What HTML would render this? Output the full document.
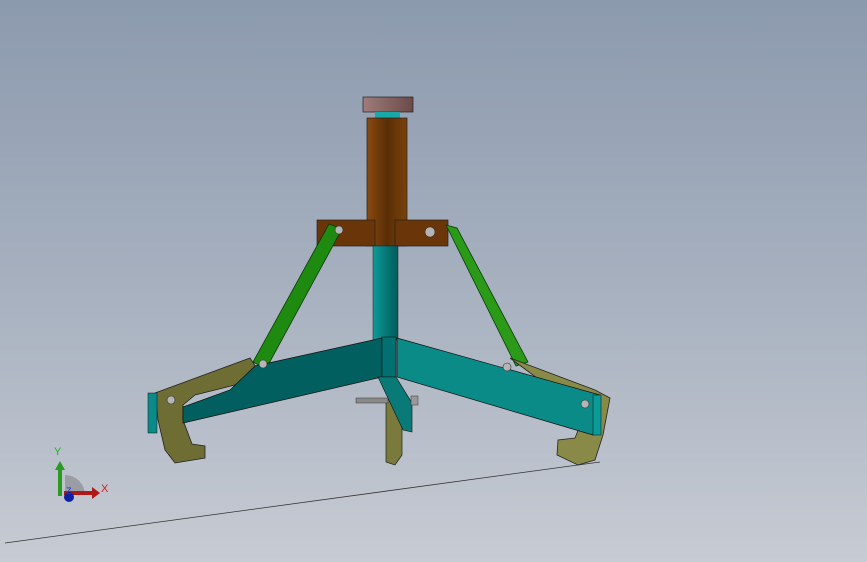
<!DOCTYPE html>
<html><head><meta charset="utf-8"><style>
html,body{margin:0;padding:0;width:867px;height:562px;overflow:hidden}
body{background:linear-gradient(#8c9aae 0%,#a6b0bf 50%,#c7cbd3 100%);font-family:"Liberation Sans",sans-serif}
svg{position:absolute;left:0;top:0}
</style></head><body>
<svg width="867" height="562" viewBox="0 0 867 562">
<defs>
<linearGradient id="br" x1="0" x2="1"><stop offset="0" stop-color="#8a4a10"/><stop offset="0.5" stop-color="#5a2e06"/><stop offset="1" stop-color="#7a420c"/></linearGradient>
<linearGradient id="cy" x1="0" x2="1"><stop offset="0" stop-color="#0d9a98"/><stop offset="1" stop-color="#005a5a"/></linearGradient>
<linearGradient id="cap" x1="0" x2="1"><stop offset="0" stop-color="#a07c7c"/><stop offset="1" stop-color="#6a4a4a"/></linearGradient>
</defs>
<path d="M5 543 L600 462" stroke="#333" stroke-width="0.8" fill="none"/>
<rect x="363" y="97" width="50" height="15" fill="url(#cap)" stroke="#222" stroke-width="0.7"/>
<rect x="375" y="112" width="25" height="7" fill="#1aa7a7"/>
<rect x="367" y="118" width="40" height="128" fill="url(#br)" stroke="#222" stroke-width="0.7"/>
<rect x="317" y="220" width="58" height="26" fill="#6a3508" stroke="#222" stroke-width="0.7"/>
<rect x="395" y="220" width="53" height="26" fill="#6a3508" stroke="#222" stroke-width="0.7"/>
<rect x="373" y="246" width="25" height="94" fill="url(#cy)" stroke="#222" stroke-width="0.5"/>
<path d="M329 224 L342 229 L266 369 L253 362 Z" fill="#1f8a10" stroke="#0a3a05" stroke-width="0.8"/>
<path d="M446 225 L457 228 L528 362 L516 366 Z" fill="#2a9a18" stroke="#0a3a05" stroke-width="0.8"/>
<path d="M155 393 L250 358 L258 370 L235 385 L195 395 L183 405 L183 420 L192 444 L205 446 L205 458 L175 463 L165 450 L158 420 Z" fill="#6e6d34" stroke="#222" stroke-width="0.8"/>
<path d="M382 338 L382 377 L183 423 L183 407 L230 390 L255 366 Z" fill="#01605f" stroke="#111" stroke-width="0.7"/>
<rect x="148" y="393" width="9" height="40" fill="#0a8a88" stroke="#111" stroke-width="0.5"/>
<path d="M510 358 L595 390 L610 398 L603 435 L595 460 L578 465 L557 455 L558 440 L575 438 L583 418 L560 395 Z" fill="#8a8a48" stroke="#222" stroke-width="0.8"/>
<path d="M397 338 L600 395 L593 435 L397 377 Z" fill="#0b8b88" stroke="#111" stroke-width="0.7"/>
<rect x="593" y="395" width="8" height="40" fill="#0a9a98" stroke="#111" stroke-width="0.5"/>
<rect x="382" y="337" width="14" height="40" fill="#017070" stroke="#111" stroke-width="0.6"/>
<path d="M386 400 L402 398 L402 455 L395 465 L386 462 Z" fill="#7a7a3c" stroke="#222" stroke-width="0.7"/>
<path d="M378 377 L396 377 L412 403 L412 432 L403 430 Z" fill="#0a7a78" stroke="#111" stroke-width="0.6"/>
<rect x="356" y="398" width="32" height="5" fill="#8a8a8a" stroke="#333" stroke-width="0.5"/>
<rect x="411" y="396" width="7" height="9" fill="#999" stroke="#333" stroke-width="0.5"/>
<g fill="#b5b5b5" stroke="#333" stroke-width="0.6">
<circle cx="339" cy="230" r="4"/><circle cx="430" cy="232" r="5"/>
<circle cx="263" cy="364" r="4"/><circle cx="507" cy="367" r="4"/>
<circle cx="171" cy="400" r="4"/><circle cx="585" cy="404" r="4"/>
</g>
<path d="M65 495 L65 475 A20 20 0 0 1 85 495 Z" fill="#9a9da3"/>
<rect x="58" y="468" width="4" height="28" fill="#2a9a20"/>
<path d="M55 470 L60 461 L65 470 Z" fill="#2a9a20"/>
<rect x="64" y="491" width="30" height="4" fill="#b01818"/>
<path d="M92 487 L100 493 L92 499 Z" fill="#b01818"/>
<circle cx="69" cy="497" r="5" fill="#1020a0"/>
<text x="54" y="455" font-size="11" fill="#20b020">Y</text>
<text x="101" y="492" font-size="11" fill="#d02020">X</text>
<text x="66" y="494" font-size="9" fill="#2030e0">Z</text>
</svg>
</body></html>
